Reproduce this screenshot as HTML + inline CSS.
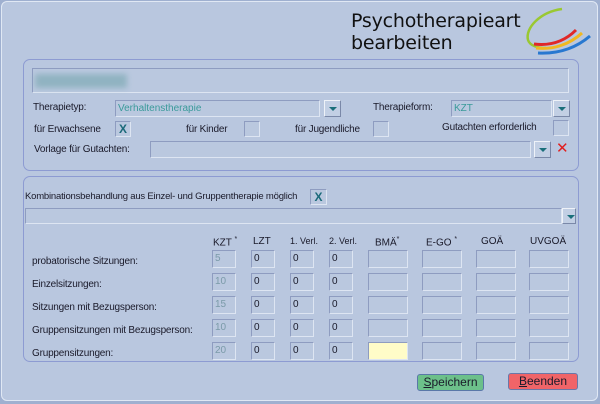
<!DOCTYPE html>
<html><head><meta charset="utf-8"><style>
*{margin:0;padding:0;box-sizing:border-box}
body{width:600px;height:404px;background:#9fb0d0;position:relative;overflow:hidden;font-family:"Liberation Sans",sans-serif;font-size:10px;color:#1a1a2a}
.win{position:absolute;left:1px;top:1px;width:597px;height:400px;background:#b9c7df;border:1px solid #e0e8f4;border-radius:6px}
.a{position:absolute}
.panel{position:absolute;border:1.5px solid #8d9bd2;border-radius:7px}
.in{position:absolute;border:1px solid;border-color:#8e9cc0 #dde5f2 #dde5f2 #8e9cc0;background:#bac8df}
.lbl{position:absolute;white-space:nowrap;letter-spacing:-0.2px}
.btn{position:absolute;width:17px;height:17px;border:1px solid;border-color:#eef2f8 #7a88a8 #7a88a8 #eef2f8;background:#c2cfe4}
.btn:after{content:"";position:absolute;left:4px;top:6px;border-left:4px solid transparent;border-right:4px solid transparent;border-top:4px solid #1a6f7a}
.x{color:#1b6a7a;font-weight:bold;font-size:12px;text-align:center;line-height:15px}
.teal{color:#3a9a9a}
.v{font-size:10px;line-height:15px;padding-left:2px}
.hd{position:absolute;top:236px;font-size:10px;white-space:nowrap}
</style></head><body>
<div class="win"></div>
<div class="lbl" style="left:351px;top:10px;font-family:'Comic Sans MS','DejaVu Sans',sans-serif;font-size:19px;line-height:22px;color:#111">Psychotherapieart<br>bearbeiten</div>
<svg class="a" style="left:520px;top:6px" width="72" height="50" viewBox="0 0 72 50">
<path d="M42 3 C20 6 5 22 8 34 C10 40 18 42 26 42" stroke="#9ac832" stroke-width="2.5" fill="none"/>
<path d="M14 38 C30 40 44 36 56 24" stroke="#e02828" stroke-width="3" fill="none"/>
<path d="M16 42 C34 44 50 38 62 27" stroke="#f0b820" stroke-width="3" fill="none"/>
<path d="M18 47 C38 48 56 42 70 30" stroke="#2878d0" stroke-width="3" fill="none"/>
</svg>

<div class="panel" style="left:23px;top:59px;width:556px;height:112px"></div>
<div class="in" style="left:32px;top:68px;width:537px;height:25px"><div style="position:absolute;left:2px;top:5px;width:92px;height:14px;background:#86aeba;filter:blur(3px);opacity:.8"></div></div>
<div class="lbl" style="left:33px;top:102px">Therapietyp:</div>
<div class="in teal v" style="left:115px;top:100px;width:205px;height:17px">Verhaltenstherapie</div>
<div class="btn" style="left:324px;top:100px"></div>
<div class="lbl" style="left:373px;top:102px">Therapieform:</div>
<div class="in teal v" style="left:451px;top:100px;width:101px;height:17px">KZT</div>
<div class="btn" style="left:553px;top:100px"></div>
<div class="lbl" style="left:34px;top:124px">für Erwachsene</div>
<div class="in x" style="left:115px;top:121px;width:16px;height:16px">X</div>
<div class="lbl" style="left:186px;top:124px">für Kinder</div>
<div class="in" style="left:244px;top:121px;width:16px;height:16px"></div>
<div class="lbl" style="left:295px;top:124px">für Jugendliche</div>
<div class="in" style="left:373px;top:121px;width:16px;height:16px"></div>
<div class="lbl" style="left:442px;top:122px">Gutachten erforderlich</div>
<div class="in" style="left:553px;top:120px;width:16px;height:16px"></div>
<div class="lbl" style="left:34px;top:144px">Vorlage für Gutachten:</div>
<div class="in" style="left:150px;top:141px;width:381px;height:17px"></div>
<div class="btn" style="left:534px;top:141px"></div>
<div class="lbl" style="left:556px;top:139px;color:#e02020;font-size:15px">✕</div>

<div class="panel" style="left:23px;top:176px;width:556px;height:186px"></div>
<div class="lbl" style="left:25px;top:191px;font-size:9.5px">Kombinationsbehandlung aus Einzel- und Gruppentherapie möglich</div>
<div class="in x" style="left:310px;top:189px;width:17px;height:16px">X</div>
<div class="in" style="left:25px;top:208px;width:537px;height:16px"></div>
<div class="btn" style="left:562px;top:208px;width:14px;height:16px"></div>

<div class="hd" style="left:213px">KZT <sup style="font-size:7px">*</sup></div>
<div class="hd" style="left:253px">LZT</div>
<div class="hd" style="left:290px;font-size:9px">1. Verl.</div>
<div class="hd" style="left:329px;font-size:9px">2. Verl.</div>
<div class="hd" style="left:375px">BMÄ<sup style="font-size:7px">*</sup></div>
<div class="hd" style="left:426px">E-GO <sup style="font-size:7px">*</sup></div>
<div class="hd" style="left:481px">GOÄ</div>
<div class="hd" style="left:530px">UVGOÄ</div>

<div class="lbl" style="left:32px;top:256px">probatorische Sitzungen:</div>
<div class="lbl" style="left:32px;top:279px">Einzelsitzungen:</div>
<div class="lbl" style="left:32px;top:302px">Sitzungen mit Bezugsperson:</div>
<div class="lbl" style="left:32px;top:325px">Gruppensitzungen mit Bezugsperson:</div>
<div class="lbl" style="left:32px;top:348px">Gruppensitzungen:</div>

<div id="g"></div>
<script>
var rows=[250,273,296,319,342],k=["5","10","15","10","20"],h="";
rows.forEach(function(y,i){
h+='<div class="in v" style="left:212px;top:'+y+'px;width:24px;height:18px;color:#7a9aa8">'+k[i]+'</div>';
[251,290,329].forEach(function(x){h+='<div class="in v" style="left:'+x+'px;top:'+y+'px;width:24px;height:18px">0</div>';});
[368,422,476,529].forEach(function(x,j){var bg=(i==4&&j==0)?';background:#fffcc8':'';h+='<div class="in" style="left:'+x+'px;top:'+y+'px;width:40px;height:18px'+bg+'"></div>';});
});
document.getElementById('g').innerHTML=h;
</script>

<div class="a" style="left:417px;top:374px;width:67px;height:17px;background:#6cc08a;border:1px solid #5a78a8;border-radius:3px;text-align:center;font-size:12px;line-height:15px"><u>S</u>peichern</div>
<div class="a" style="left:508px;top:373px;width:70px;height:17px;background:#f06468;border:1px solid #6a78a8;border-radius:3px;text-align:center;font-size:12px;line-height:15px"><u>B</u>eenden</div>
</body></html>
